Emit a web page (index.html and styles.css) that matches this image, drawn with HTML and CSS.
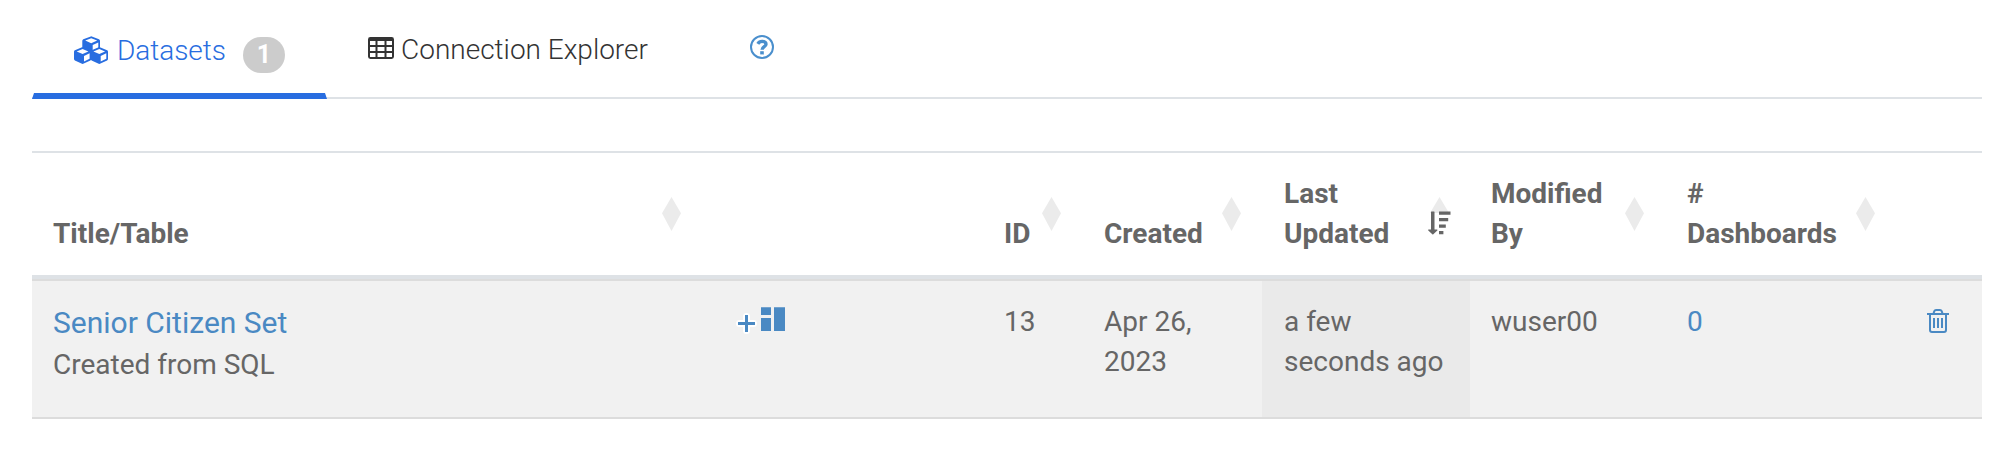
FILE: index.html
```
<!DOCTYPE html>
<html lang="en">
<head>
<meta charset="utf-8">
<title>Datasets</title>
<link rel="stylesheet" href="styles.css">
</head>
<body>
<nav class="tabs">
  <a class="tab tab-active">
    <svg class="icon-cubes" width="34" height="28" viewBox="0 0 34 28">
      <g>
        <path fill="currentColor" d="M16.8 0.4 Q17.3 0.2 17.8 0.4 L25 3.2 Q26 3.7 26 4.8 V12.2 Q26 13.2 25.1 13.7 L17.8 17.2 Q17.2 17.5 16.6 17.2 L9.2 13.7 Q8.3 13.2 8.3 12.2 V4.8 Q8.3 3.7 9.3 3.2 Z"/>
        <path fill="#fff" d="M17.2 2.2 L23.2 4.6 L17.2 7.3 L11.2 4.6 Z M18.7 9.1 L24.3 6.5 V12 L18.7 14.7 Z"/>
      </g>
      <g>
        <path fill="currentColor" d="M8 11.3 Q8.6 11 9.2 11.3 L16.4 14.2 Q17.3 14.6 17.3 15.7 V23 Q17.3 24 16.4 24.4 L9.2 27.8 Q8.6 28.1 8 27.8 L0.9 24.4 Q0 24 0 23 V15.7 Q0 14.6 0.9 14.2 Z"/>
        <path fill="#fff" d="M8.6 13 L14.4 15.4 L8.6 18 L2.7 15.4 Z M10 19.9 L15.6 17.3 V22.8 L10 25.5 Z"/>
      </g>
      <g>
        <path fill="currentColor" d="M24.7 11.3 Q25.3 11 25.9 11.3 L33.1 14.2 Q34 14.6 34 15.7 V23 Q34 24 33.1 24.4 L25.9 27.8 Q25.3 28.1 24.7 27.8 L17.6 24.4 Q16.7 24 16.7 23 V15.7 Q16.7 14.6 17.6 14.2 Z"/>
        <path fill="#fff" d="M25.3 13 L31.1 15.4 L25.3 18 L19.4 15.4 Z M26.7 19.9 L32.3 17.3 V22.8 L26.7 25.5 Z"/>
      </g>
    </svg>
    <span class="tab-label label-datasets">Datasets</span>
    <span class="badge">1</span>
  </a>
  <a class="tab tab-explorer">
    <svg class="icon-table" width="26" height="22" viewBox="0 0 26 22">
      <path fill="currentColor" fill-rule="evenodd" d="M2.4 0 H23.6 Q26 0 26 2.4 V19.6 Q26 22 23.6 22 H2.4 Q0 22 0 19.6 V2.4 Q0 0 2.4 0 Z M2 4 V8 H7.5 V4 Z M9.5 4 V8 H16.5 V4 Z M18.5 4 V8 H24 V4 Z M2 10 V14 H7.5 V10 Z M9.5 10 V14 H16.5 V10 Z M18.5 10 V14 H24 V10 Z M2 16 V20 H7.5 V16 Z M9.5 16 V20 H16.5 V16 Z M18.5 16 V20 H24 V16 Z"/>
    </svg>
    <span class="tab-label label-explorer">Connection Explorer</span>
  </a>
  <a class="help">
    <svg width="24" height="24" viewBox="0 0 24 24">
      <circle cx="12" cy="12" r="11" fill="none" stroke="currentColor" stroke-width="2"/>
      <path fill="none" stroke="currentColor" stroke-width="3.4" d="M7.8 8.8 C8.9 7 10.1 6.4 12 6.4 C14.3 6.4 16 7.4 16 9.2 C16 11.8 12.1 11.6 12.1 14.8"/>
      <path fill="currentColor" d="M10.2 16.2 H13.8 V19.4 H10.2 Z"/>
    </svg>
  </a>
</nav>

<table class="datasets">
  <colgroup>
    <col class="c-title"><col class="c-add"><col class="c-id"><col class="c-created"><col class="c-updated"><col class="c-modified"><col class="c-dash"><col class="c-del">
  </colgroup>
  <thead>
    <tr>
      <th><div class="head"><span>Title/Table</span><i class="sort"></i></div></th>
      <th></th>
      <th class="inset"><div class="head"><span>ID</span><i class="sort"></i></div></th>
      <th class="inset"><div class="head"><span>Created</span><i class="sort"></i></div></th>
      <th class="inset"><div class="head"><span>Last<br>Updated</span><i class="sort sort-desc">
        <svg class="icon-desc" width="23" height="24" viewBox="0 0 23 24">
          <path fill="currentColor" d="M3 1 Q3 0.5 3.5 0.5 H6 Q6.5 0.5 6.5 1 V18.6 H9 Q9.8 18.8 9.3 19.5 L5.3 23.3 Q4.8 23.7 4.3 23.3 L0.3 19.5 Q-0.2 18.8 0.5 18.6 H3 Z M11 0.5 H22.5 V3.7 H11 Z M11 7 H20.2 V10.2 H11 Z M11 13.6 H17.8 V16.8 H11 Z M11 20 H15.4 V23.2 H11 Z"/>
        </svg></i></div></th>
      <th><div class="head"><span>Modified<br>By</span><i class="sort"></i></div></th>
      <th class="inset"><div class="head"><span>#<br>Dashboards</span><i class="sort"></i></div></th>
      <th></th>
    </tr>
  </thead>
  <tbody>
    <tr>
      <td><div class="title"><a class="link">Senior Citizen Set</a></div><div class="source">Created from SQL</div></td>
      <td class="add">
        <svg class="icon-add" width="52" height="30" viewBox="0 0 52 30">
          <path fill="none" stroke="#fff" stroke-width="7" stroke-linejoin="round" stroke-linecap="round" d="M4.5 18.5 H18.5 M11.5 11.5 V25.5"/>
          <path fill="none" stroke="#4a89c3" stroke-width="3" d="M3 18.5 H20 M11.5 10 V27"/>
          <path fill="#4a89c3" d="M26 2.3 H36 V10 H26 Z M26 13 H36 V26 H26 Z M39 2.3 H50 V26 H39 Z"/>
        </svg>
      </td>
      <td class="inset">13</td>
      <td class="inset">Apr 26,<br>2023</td>
      <td class="inset sorted">a few<br>seconds ago</td>
      <td>wuser00</td>
      <td class="inset"><a class="link">0</a></td>
      <td class="delete">
        <svg class="icon-trash" width="22" height="24" viewBox="0 0 22 24">
          <path fill="none" stroke="#4a89c3" stroke-width="2" d="M0 5 H22 M6.5 4.5 L7.3 2.2 Q7.8 1 9 1 H13 Q14.2 1 14.7 2.2 L15.5 4.5 M3 5 V21 Q3 23 5 23 H17 Q19 23 19 21 V5 M7 9 V19 M11 9 V19 M15 9 V19"/>
        </svg>
      </td>
    </tr>
  </tbody>
</table>
</body>
</html>
```
FILE: styles.css
```
* { box-sizing: border-box; }

body {
  margin: 0;
  background: #fff;
  color: #666;
  font-family: Roboto, "Liberation Sans", sans-serif;
  font-size: 28px;
  line-height: 40px;
}

svg { display: block; flex: none; }

.tabs {
  display: flex;
  align-items: flex-start;
  width: 1950px;
  height: 99px;
  margin-left: 32px;
  border-bottom: 2px solid #dee2e6;
}

.tab {
  display: flex;
  align-items: flex-start;
  height: 99px;
  font-weight: 300;
  white-space: nowrap;
}

.tab-active {
  width: 295px;
  padding-left: 40px;
  color: #286de0;
  border: solid transparent;
  border-width: 0 2px 6px;
  border-bottom-color: #286de0;
}

.icon-cubes { margin-top: 36px; }

.label-datasets { width: 109px; margin: 31px 0 0 9px; letter-spacing: -0.05px; }

.badge {
  width: 42px;
  height: 36px;
  margin: 37px 0 0 17px;
  border-radius: 18px;
  background: #ccc;
  color: #fff;
  font-size: 25px;
  font-weight: 700;
  line-height: 35px;
  text-align: center;
}

.tab-explorer { width: 423px; padding-left: 41px; color: #333; }

.icon-table { margin-top: 37px; }

.label-explorer { margin: 30px 0 0 7px; }

.help { padding-top: 35px; color: #4a8fcd; }

.datasets {
  width: 1950px;
  margin: 52px 0 0 32px;
  table-layout: fixed;
  border-collapse: separate;
  border-spacing: 0;
}

.c-title { width: 670px; }
.c-add { width: 280px; }
.c-id { width: 100px; }
.c-created { width: 180px; }
.c-updated { width: 208px; }
.c-modified { width: 195px; }
.c-dash { width: 231px; }
.c-del { width: 86px; }

th {
  height: 128px;
  padding: 21px 21px 21px;
  border-top: 2px solid #dee2e6;
  border-bottom: 4px solid #dee2e6;
  text-align: left;
  vertical-align: bottom;
  font-weight: 700;
}

.head { display: flex; justify-content: space-between; align-items: flex-end; }

.sort {
  flex: none;
  width: 19px;
  height: 34px;
  margin-bottom: 23px;
  background: #ebebeb;
  clip-path: polygon(50% 0, 100% 48%, 50% 100%, 0 48%);
}

.sort-desc {
  position: relative;
  background: none;
  clip-path: none;
}

.sort-desc::before {
  content: "";
  display: block;
  height: 16px;
  background: #ebebeb;
  clip-path: polygon(50% 0, 100% 100%, 0 100%);
}

.icon-desc { position: absolute; left: -2px; top: 14px; }

td {
  height: 140px;
  padding: 21px 21px 0;
  background: #f1f1f1;
  border-top: 2px solid #dcdcdc;
  border-bottom: 2px solid #dcdcdc;
  vertical-align: top;
}

.inset { padding-left: 22px; }
.sorted { background: #eaeaea; }
.link { color: #4a89c3; }
.title { padding-top: 1px; font-size: 30px; }
.source { padding-top: 2px; }
.add { padding: 24px 0 0 33px; }
.delete { padding: 28px 0 0 31px; }
```
